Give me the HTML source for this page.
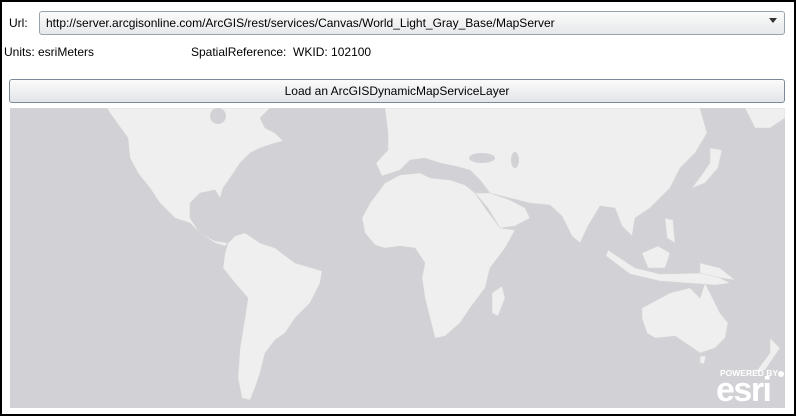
<!DOCTYPE html>
<html><head><style>
body{margin:0;width:796px;height:416px;overflow:hidden;background:#fff;font-family:"Liberation Sans",Tahoma,sans-serif;font-size:12px;color:#000}
.frame{position:absolute;left:0;top:0;width:792px;height:412px;border:2px solid #000;}
.abs{position:absolute}
.combo{left:39px;top:11px;width:744px;height:22px;border:1px solid #9aa3ad;border-radius:3px;background:linear-gradient(#fbfbfb,#e6e8ea);}
.btn{left:9px;top:79px;width:774px;height:22px;border:1px solid #7a8a99;border-radius:3px;background:linear-gradient(#fbfbfb,#e3e5e8);text-align:center;line-height:22px}
.map{left:10px;top:108px;width:775px;height:300px;background:#d1d1d6;overflow:hidden}
</style></head><body>
<div class="frame"></div>
<div class="abs" style="left:9px;top:16px">Url:</div>
<div class="abs combo"><span style="position:absolute;left:6px;top:4px">http://server.arcgisonline.com/ArcGIS/rest/services/Canvas/World_Light_Gray_Base/MapServer</span><span style="position:absolute;right:7px;top:6px;border-left:4px solid transparent;border-right:4px solid transparent;border-top:5px solid #333"></span></div>
<div class="abs" style="left:4px;top:45px">Units: esriMeters</div>
<div class="abs" style="left:191px;top:45px">SpatialReference:&nbsp; WKID: 102100</div>
<div class="abs btn">Load an ArcGISDynamicMapServiceLayer</div>
<div class="abs map">
<svg width="775" height="300" viewBox="0 0 775 300">
<g fill="#efefef" stroke="#d8d8d8" stroke-width="0.6">
<path d="M97,0 L260,0 L250,10 L255,20 L265,25 L273,33 L265,35 L250,40 L240,45 L230,55 L220,70 L213,80 L210,90 L205,82 L190,85 L180,95 L180,110 L190,125 L205,133 L218,135 L215,138 L205,135 L190,125 L180,115 L165,110 L150,95 L140,80 L128,65 L120,50 L118,30 L100,5Z"/>
<path d="M218,135 L225,128 L235,125 L250,135 L265,140 L285,155 L312,163 L310,175 L300,195 L285,210 L275,225 L265,232 L255,245 L250,265 L245,280 L240,292 L232,290 L228,270 L230,240 L235,210 L238,190 L225,175 L213,160 L215,145Z"/>
<path d="M375,0 L690,0 L697,25 L685,45 L670,60 L660,80 L640,100 L625,110 L622,128 L612,118 L605,100 L590,98 L578,118 L570,135 L562,128 L552,108 L540,97 L520,95 L500,90 L480,85 L470,72 L460,62 L445,58 L430,55 L415,50 L400,52 L390,62 L372,68 L366,55 L378,42 L378,25Z"/>
<path d="M352,110 L360,95 L375,75 L390,67 L410,65 L420,70 L440,72 L455,77 L465,85 L475,100 L490,120 L505,122 L495,140 L480,160 L475,180 L460,200 L450,215 L435,228 L425,230 L420,210 L415,190 L412,170 L415,155 L405,140 L390,138 L375,140 L365,137 L355,125Z"/>
<path d="M465,85 L480,85 L500,92 L515,100 L520,110 L505,118 L490,120 L478,100Z"/>
<path d="M482,185 L492,178 L495,190 L488,208 L482,205Z"/>
<path d="M700,40 L712,42 L708,60 L695,75 L682,80 L693,65 L700,55Z"/>
<path d="M735,0 L775,0 L775,10 L760,20 L745,20Z"/>
<path d="M598,142 L625,160 L650,166 L700,165 L720,175 L705,177 L650,173 L620,166 L596,148Z"/>
<path d="M632,145 L648,138 L660,145 L655,160 L638,160Z"/>
<path d="M655,110 L663,112 L665,135 L657,130Z"/>
<path d="M690,155 L710,160 L725,172 L712,170 L690,165Z"/>
<path d="M632,200 L660,185 L680,180 L690,190 L695,175 L710,205 L718,215 L715,230 L705,240 L690,245 L680,238 L665,228 L645,230 L637,225 L632,210Z"/>
<path d="M690,248 L696,248 L694,256 L690,255Z"/>
<path d="M760,230 L770,240 L755,262 L745,265 L760,245Z"/>
</g>
<g fill="#d1d1d6"><ellipse cx="472" cy="50" rx="13" ry="5"/><ellipse cx="505" cy="52" rx="4" ry="8"/><ellipse cx="208" cy="8" rx="8" ry="8"/></g>
<text x="710" y="268" font-size="8.5" font-weight="bold" fill="#fff" font-family="Liberation Sans">POWERED BY</text>
<circle cx="771" cy="266" r="3" fill="#fff"/>
<text x="706" y="293" font-size="34" font-weight="bold" fill="#fff" font-family="Liberation Sans" letter-spacing="-1.5">esri</text>
</svg>
</div>
</body></html>
